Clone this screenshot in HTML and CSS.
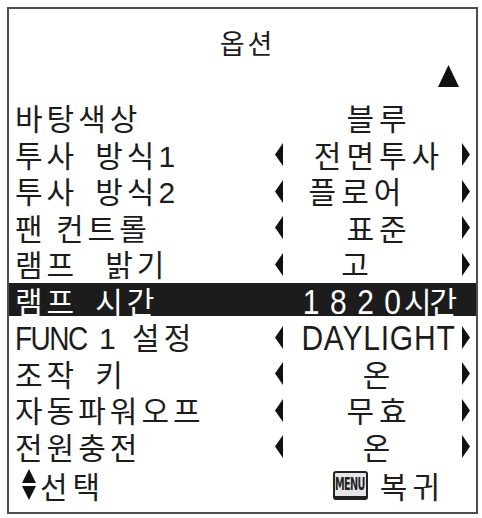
FILE: index.html
```html
<!DOCTYPE html>
<html lang="ko">
<head>
<meta charset="utf-8">
<title>옵션</title>
<link rel="stylesheet" href="styles.css">
</head>
<body>
<div class="panel">
  <div class="title">옵션</div>
  <div class="scroll-up">
    <svg class="tri-up" viewBox="0 0 21 22" width="21" height="22"><polygon points="10.5,0 21,22 0,22" fill="#111"/></svg>
  </div>
  <div class="rows">
    <div class="row">
      <span class="label">바탕색상</span><span class="arr"></span><span class="value">블루</span><span class="arr"></span>
    </div>
    <div class="row">
      <span class="label">투사 방식1</span>
      <svg class="arr" viewBox="0 0 8 23" width="8" height="23"><polygon points="8,0 8,23 0,11.5" fill="#111"/></svg>
      <span class="value">전면투사</span>
      <svg class="arr" viewBox="0 0 8 23" width="8" height="23"><polygon points="0,0 8,11.5 0,23" fill="#111"/></svg>
    </div>
    <div class="row">
      <span class="label">투사 방식2</span>
      <svg class="arr" viewBox="0 0 8 23" width="8" height="23"><polygon points="8,0 8,23 0,11.5" fill="#111"/></svg>
      <span class="value shift">플로어</span>
      <svg class="arr" viewBox="0 0 8 23" width="8" height="23"><polygon points="0,0 8,11.5 0,23" fill="#111"/></svg>
    </div>
    <div class="row">
      <span class="label narrow">팬 컨트롤</span>
      <svg class="arr" viewBox="0 0 8 23" width="8" height="23"><polygon points="8,0 8,23 0,11.5" fill="#111"/></svg>
      <span class="value">표준</span>
      <svg class="arr" viewBox="0 0 8 23" width="8" height="23"><polygon points="0,0 8,11.5 0,23" fill="#111"/></svg>
    </div>
    <div class="row">
      <span class="label wide">램프 밝기</span>
      <svg class="arr" viewBox="0 0 8 23" width="8" height="23"><polygon points="8,0 8,23 0,11.5" fill="#111"/></svg>
      <span class="value shift">고</span>
      <svg class="arr" viewBox="0 0 8 23" width="8" height="23"><polygon points="0,0 8,11.5 0,23" fill="#111"/></svg>
    </div>
    <div class="row selected">
      <span class="label">램프 시간</span><span class="arr"></span><span class="value"><span class="digits"><span class="digits-spread">182</span>0</span><span class="unit">시간</span></span><span class="arr"></span>
    </div>
    <div class="row">
      <span class="label tight"><span class="latin">FUNC</span> 1 설정</span>
      <svg class="arr" viewBox="0 0 8 23" width="8" height="23"><polygon points="8,0 8,23 0,11.5" fill="#111"/></svg>
      <span class="value latin-val"><span class="tall">DAYLIGHT</span></span>
      <svg class="arr" viewBox="0 0 8 23" width="8" height="23"><polygon points="0,0 8,11.5 0,23" fill="#111"/></svg>
    </div>
    <div class="row">
      <span class="label">조작 키</span>
      <svg class="arr" viewBox="0 0 8 23" width="8" height="23"><polygon points="8,0 8,23 0,11.5" fill="#111"/></svg>
      <span class="value">온</span>
      <svg class="arr" viewBox="0 0 8 23" width="8" height="23"><polygon points="0,0 8,11.5 0,23" fill="#111"/></svg>
    </div>
    <div class="row">
      <span class="label">자동파워오프</span>
      <svg class="arr" viewBox="0 0 8 23" width="8" height="23"><polygon points="8,0 8,23 0,11.5" fill="#111"/></svg>
      <span class="value">무효</span>
      <svg class="arr" viewBox="0 0 8 23" width="8" height="23"><polygon points="0,0 8,11.5 0,23" fill="#111"/></svg>
    </div>
    <div class="row">
      <span class="label">전원충전</span>
      <svg class="arr" viewBox="0 0 8 23" width="8" height="23"><polygon points="8,0 8,23 0,11.5" fill="#111"/></svg>
      <span class="value">온</span>
      <svg class="arr" viewBox="0 0 8 23" width="8" height="23"><polygon points="0,0 8,11.5 0,23" fill="#111"/></svg>
    </div>
  </div>
  <div class="footer">
    <div class="hint">
      <svg class="updown" viewBox="0 0 14 32" width="14" height="32"><polygon points="7,0 14,14 0,14" fill="#111"/><polygon points="0,17 14,17 7,31" fill="#111"/></svg>
      <span class="hint-text">선택</span>
    </div>
    <div class="hint back">
      <span class="menu-key"><span class="menu-text">MENU</span></span>
      <span class="hint-text">복귀</span>
    </div>
  </div>
</div>
</body>
</html>
```

FILE: styles.css
```css
* { box-sizing: border-box; }
html, body {
  margin: 0;
  padding: 0;
  background: #fff;
}
body {
  font-family: "Liberation Sans", "Noto Sans CJK KR", sans-serif;
  color: #1c1c1c;
}
.panel {
  margin: 7px 0 0 7px;
  width: 471px;
  height: 507px;
  border: 2px solid #4d4d4d;
  display: flex;
  flex-direction: column;
}
.title {
  font-size: 27px;
  line-height: 34px;
  padding-top: 18.5px;
  padding-left: 10px;
  text-align: center;
  letter-spacing: 3px;
}
.scroll-up {
  display: flex;
  justify-content: flex-end;
  margin-top: 3.5px;
  padding-right: 17px;
  height: 22px;
}
.tri-up { display: block; }
.rows {
  margin-top: 13.5px;
  display: flex;
  flex-direction: column;
  gap: 3.5px;
}
.row {
  height: 33px;
  display: grid;
  grid-template-columns: 266px 8px 179px 8px;
  align-items: start;
  font-size: 30px;
  line-height: 33px;
}
.label {
  padding-left: 6px;
  padding-top: 2.7px;
  letter-spacing: 4px;
  word-spacing: 4.7px;
  white-space: nowrap;
}
.label.wide { word-spacing: 14.7px; }
.label.narrow { word-spacing: -3px; }
.label.tight { word-spacing: 0; }
.arr { display: block; align-self: center; }
.value {
  padding-top: 2.7px;
  text-align: center;
  padding-left: 13px;
  letter-spacing: 5px;
  white-space: nowrap;
}
.value.shift { padding-left: 0; padding-right: 30px; }
.latin {
  display: inline-block;
  font-size: 28px;
  letter-spacing: -1.5px;
  transform: scaleY(1.18);
  transform-origin: 50% 70%;
}
.latin-val { letter-spacing: 0.8px; padding-left: 12px; }
.tall {
  display: inline-block;
  transform: scaleY(1.18);
  transform-origin: 50% 70%;
}
.digits {
  display: inline-block;
  letter-spacing: 3px;
  transform: scaleY(1.18);
  transform-origin: 50% 70%;
}
.digits-spread { letter-spacing: 10.5px; }
.unit { letter-spacing: -2px; }
.row.selected {
  background: #1c1c1c;
  color: #fff;
}
.footer {
  margin-top: 6.5px;
  height: 33px;
  display: flex;
  align-items: center;
  font-size: 30px;
  line-height: 33px;
  letter-spacing: 5px;
}
.hint {
  display: flex;
  align-items: center;
  gap: 4px;
  height: 33px;
}
.hint-text {
  display: block;
  height: 33px;
  padding-top: 2.7px;
}
.updown { display: block; margin-left: 13px; }
.back { margin-left: auto; margin-right: 31px; gap: 12px; }
.menu-key {
  width: 35px;
  height: 29px;
  border: 2px solid #222;
  border-bottom-width: 4px;
  border-radius: 3px;
  background: #e6e6e6;
  display: flex;
  align-items: center;
  justify-content: center;
  overflow: hidden;
}
.menu-text {
  font-family: "DejaVu Sans Condensed", "DejaVu Sans", sans-serif;
  font-weight: bold;
  font-size: 18px;
  line-height: 20px;
  letter-spacing: -1px;
  display: inline-block;
  transform: scaleX(0.6);
  color: #222;
}
```
